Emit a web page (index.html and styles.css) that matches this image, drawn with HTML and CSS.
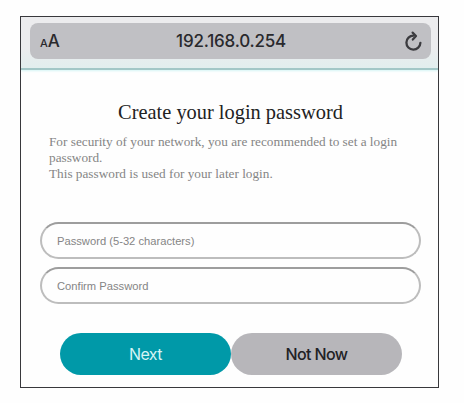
FILE: index.html
```html
<!DOCTYPE html>
<html lang="en">
<head>
    <meta charset="UTF-8">
    <meta name="viewport" content="width=device-width, initial-scale=1.0">
    <title>Create your login password</title>
    <link rel="stylesheet" href="styles.css">
</head>
<body>
    <div class="phone-frame">
        <header class="toolbar">
            <div class="address-bar">
                <span class="text-size"><span class="small-a">A</span>A</span>
                <span class="address">192.168.0.254</span>
                <svg class="reload-icon" viewBox="0 0 20 22" width="20" height="22">
                    <path d="M11.5 5.6A7 7 0 1 0 18.4 12.8" fill="none" stroke="currentColor" stroke-width="2.3" stroke-linecap="round"/>
                    <path d="M10.6 2.6L14 6L10.8 9.6" fill="none" stroke="currentColor" stroke-width="2.2" stroke-linecap="round" stroke-linejoin="round"/>
                </svg>
            </div>
        </header>

        <main class="content">
            <h1>Create your login password</h1>
            <p class="description">For security of your network, you are recommended to set a login password.<br>This password is used for your later login.</p>

            <form class="login-form">
                <input type="password" class="field" placeholder="Password (5-32 characters)">
                <input type="password" class="field" placeholder="Confirm Password">
                <div class="buttons">
                    <button type="button" class="button next">Next</button>
                    <button type="button" class="button skip">Not Now</button>
                </div>
            </form>
        </main>
    </div>
</body>
</html>
```
FILE: styles.css
```css
:root {
    --accent: #0099a8;
    --bar-grey: #c0c0c4;
    --button-grey: #b7b6ba;
    --frame: #38383c;
}

* {
    box-sizing: border-box;
}

body {
    margin: 0;
    padding: 16px 0 0 20px;
    background-color: #fefefe;
    font-family: "Liberation Sans", Arial, sans-serif;
}

.phone-frame {
    width: 419px;
    height: 372px;
    border: 1.5px solid var(--frame);
    background-color: #fefefe;
    overflow: hidden;
}

/* Browser toolbar */
.toolbar {
    height: 53px;
    padding: 6px 7px 0 9px;
    background: linear-gradient(#ececee 60%, #e2eeee);
    border-bottom: 2px solid #a3c7c7;
    box-shadow: 0 1px 2px #d5f5f5;
}

.address-bar {
    display: grid;
    grid-template-columns: 60px 1fr 60px;
    align-items: center;
    height: 36px;
    padding: 0 9px 0 10px;
    border-radius: 8px;
    background-color: var(--bar-grey);
    color: #29292d;
    font-family: Inter, sans-serif;
}

.text-size {
    font-size: 17px;
    font-weight: 500;
}

.small-a {
    font-size: 11px;
}

.address {
    text-align: center;
    font-size: 17px;
    font-weight: 500;
    letter-spacing: -0.2px;
}

.reload-icon {
    justify-self: end;
    color: #3b3b3f;
}

/* Page content */
.content {
    padding: 30px 17px 0 19px;
}

h1 {
    margin: 0;
    color: #222;
    font: 20.4px/24px "Liberation Serif", "Times New Roman", serif;
    text-align: center;
}

.description {
    margin: 10px 9px 0;
    color: #858585;
    font: 13.25px/16px "Liberation Serif", "Times New Roman", serif;
}

.login-form {
    margin-top: 40px;
}

.field {
    display: block;
    width: 100%;
    height: 37px;
    margin: 0 0 8px;
    padding: 0 15px;
    border: 2px solid #bdbdbd;
    border-top-color: #9d9d9d;
    border-radius: 19px;
    background-color: #fefefe;
    font: 11.2px "Liberation Sans", Arial, sans-serif;
}

.field::placeholder {
    color: #858585;
    opacity: 1;
}

.buttons {
    display: flex;
    margin: 29px 19px 0 20px;
}

.button {
    flex: 1;
    height: 42px;
    padding: 0;
    border: none;
    border-radius: 21px;
    font: 500 16px Inter, sans-serif;
    letter-spacing: -0.6px;
}

.next {
    background-color: var(--accent);
    color: #d5f4f5;
    font-weight: 400;
}

.skip {
    background-color: var(--button-grey);
    color: #222226;
}
```
